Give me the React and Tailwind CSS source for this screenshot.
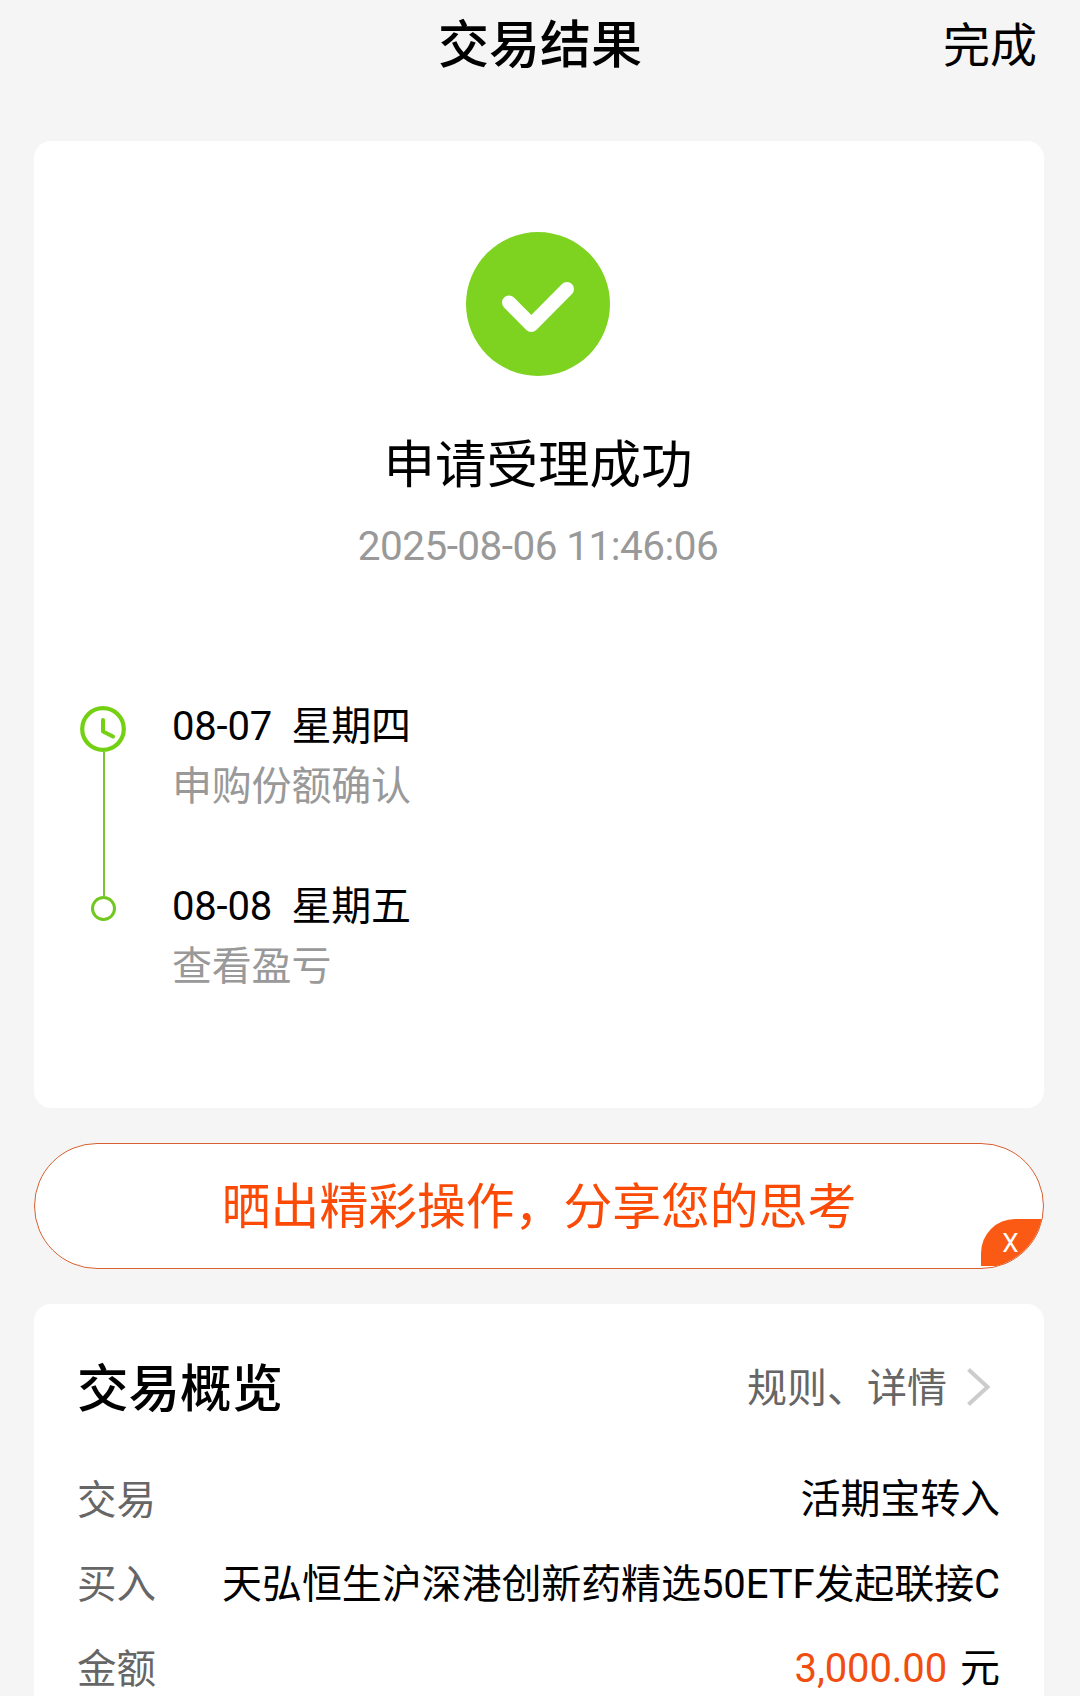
const steps = [
  { date: '08-07', day: '星期四', note: '申购份额确认' },
  { date: '08-08', day: '星期五', note: '查看盈亏' },
]

const rows = [
  { label: '交易', value: '活期宝转入' },
  { label: '买入', value: '天弘恒生沪深港创新药精选50ETF发起联接C' },
  { label: '金额', amount: '3,000.00', value: '元' },
]

function Header() {
  return (
    <header className="grid h-[88px] grid-cols-[1fr_auto_1fr] items-center pt-[3px] pr-[43px] pl-[43px]">
      <span />
      <h1 className="text-[51px] leading-[76px] font-medium">交易结果</h1>
      <button className="justify-self-end text-[47px] leading-[76px]">完成</button>
    </header>
  )
}

function SuccessIcon() {
  return (
    <svg className="size-36" viewBox="0 0 144 144" fill="none">
      <circle cx="72" cy="72" r="72" fill="#7ed321" />
      <path
        d="M43 70.5 65.3 93 101 57"
        stroke="#fff"
        strokeWidth="14"
        strokeLinecap="round"
        strokeLinejoin="round"
      />
    </svg>
  )
}

function ClockIcon() {
  return (
    <svg className="size-[46px]" viewBox="0 0 46 46" fill="none" stroke="#74d013">
      <circle cx="23" cy="23" r="20.8" strokeWidth="4.2" />
      <path d="M23 14v11.5l10 5" strokeWidth="4" strokeLinecap="round" strokeLinejoin="round" />
    </svg>
  )
}

function Timeline() {
  return (
    <div className="mt-[123px] flex gap-[46px] pl-[46px]">
      <div className="flex flex-col items-center pt-[11px]">
        <ClockIcon />
        <div className="ml-px h-36 w-0.5 bg-[#78c52e]" />
        <div className="size-[25px] rounded-full border-3 border-[#70c81e]" />
      </div>
      <ul className="pt-[2px] text-[40px] leading-[60px] tracking-[-0.2px]">
        {steps.map(({ date, day, note }) => (
          <li key={date} className="h-[180px]">
            <p className="whitespace-pre">{`${date}  ${day}`}</p>
            <p className="text-[#999]">{note}</p>
          </li>
        ))}
      </ul>
    </div>
  )
}

function ResultCard() {
  return (
    <section className="h-[967px] rounded-[17px] bg-white pt-[91px]">
      <div className="flex flex-col items-center pr-0.5">
        <SuccessIcon />
        <h2 className="mt-[52px] text-[51.5px] leading-[76px]">申请受理成功</h2>
        <p className="mt-[16px] text-[40.5px] leading-[52px] tracking-[-0.55px] text-[#999]">
          2025-08-06 11:46:06
        </p>
      </div>
      <Timeline />
    </section>
  )
}

function ShareBanner() {
  return (
    <div className="relative flex h-[126px] items-center justify-center overflow-hidden rounded-full border-[1.5px] border-[#d9602f] bg-white">
      <p className="pt-[3px] text-[48.8px] leading-[76px] text-[#fa4a06]">晒出精彩操作，分享您的思考</p>
      <button className="absolute right-0 bottom-[2px] h-[47px] w-[62px] rounded-tl-[34px] bg-[#fb5a14] pr-[3px] text-center text-[26px] leading-[49px] text-white">
        X
      </button>
    </div>
  )
}

function Overview() {
  return (
    <section className="h-[420px] rounded-t-[17px] bg-white pt-[46px] pr-[44px] pl-[43px]">
      <div className="flex h-[76px] items-center justify-between">
        <h2 className="pt-[3px] text-[51.5px] font-medium">交易概览</h2>
        <a className="flex items-center gap-[20px] pr-[9px] text-[40px] text-[#666]">
          <span className="pt-px">规则、详情</span>
          <svg className="mb-[3px] h-[38px] w-[24px]" viewBox="0 0 24 38" fill="none" stroke="#ccc" strokeWidth="4">
            <path d="M1.5 1.5 20.5 19 1.5 36.5" />
          </svg>
        </a>
      </div>
      <dl className="pt-[32px] text-[40px] tracking-[-0.1px]">
        {rows.map(({ label, amount, value }) => (
          <div key={label} className="flex h-[84.5px] items-center justify-between whitespace-nowrap">
            <dt className="text-[39.5px] text-[#666]">{label}</dt>
            <dd>
              {amount && <span className="mr-[13px] text-[#f04e10]">{amount}</span>}
              {value}
            </dd>
          </div>
        ))}
      </dl>
    </section>
  )
}

export default function App() {
  return (
    <div
      lang="zh-CN"
      className="h-[1696px] w-[1080px] overflow-hidden bg-[#f5f5f5] font-[Roboto,'Noto_Sans_CJK_SC',sans-serif] text-black"
    >
      <Header />
      <main className="mt-[53px] flex flex-col gap-[35px] pr-[36px] pl-[34px]">
        <ResultCard />
        <ShareBanner />
        <Overview />
      </main>
    </div>
  )
}
